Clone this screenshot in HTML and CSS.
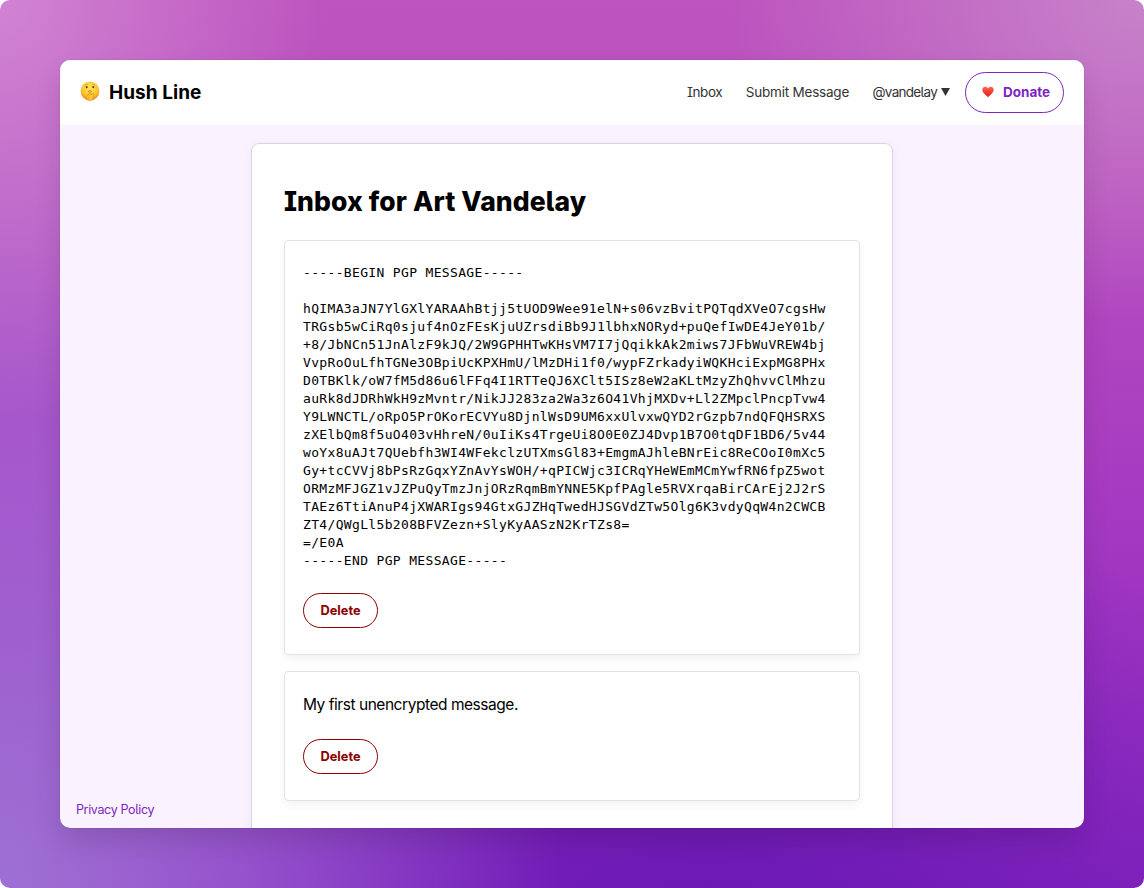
FILE: index.html
```html
<!DOCTYPE html>
<html lang="en">
<head>
<meta charset="utf-8">
<title>Hush Line</title>
<link rel="stylesheet" href="styles.css">
</head>
<body>
<div class="backdrop">
  <div class="window">
    <header class="header">
      <div class="brand">
        <svg class="brand-icon" viewBox="0 0 20 20">
          <defs><radialGradient id="face" cx=".5" cy=".35" r=".65"><stop offset="0" stop-color="#ffe65c"/><stop offset=".65" stop-color="#fcc52f"/><stop offset="1" stop-color="#e8871a"/></radialGradient></defs>
          <circle cx="10" cy="10" r="9.4" fill="url(#face)"/>
          <path d="M4.6 4.4q1.5-1.5 3-.7M12.4 3.7q1.6-.8 3 .7" fill="none" stroke="#d9952a" stroke-width=".7"/>
          <ellipse cx="6.7" cy="6.2" rx=".9" ry="1.1" fill="#5b3512"/><ellipse cx="13.2" cy="6.2" rx=".9" ry="1.1" fill="#5b3512"/>
          <path d="M8.2 10.6q1.8-1.3 3.6 0" fill="none" stroke="#b86b1c" stroke-width=".8"/>
          <path d="M9.2 9.6q.9-1 1.6 0v4.2l2.5-1.2q1 .5.3 1.6l-1 3.8q-.8 1.6-3.2 1.5-2.5-.3-2.6-2.7l.2-2.6q.7-1 2.2-.3z" fill="#ffc832" stroke="#db8a20" stroke-width=".6"/>
          <path d="M8 16.3l1.3.3m-1 1.3l1.4.2" stroke="#cf7817" stroke-width=".5"/>
        </svg>
        <span class="brand-name">Hush Line</span>
      </div>
      <nav class="nav">
        <a class="link inbox">Inbox</a>
        <a class="link submit">Submit Message</a>
        <a class="link user"><span class="handle">@vandelay</span><svg class="caret" viewBox="0 0 9 8"><path d="M0 0h9L4.5 8z" fill="#333"/></svg></a>
        <a class="donate">
          <svg class="heart" viewBox="0 0 12 12"><defs><linearGradient id="red" x2="0" y2="1"><stop stop-color="#ff6a56"/><stop offset=".5" stop-color="#f4382e"/><stop offset="1" stop-color="#d81f1c"/></linearGradient></defs><path d="M6 11.6C4.6 9.2.3 7.3.3 3.6.3.2 4.6-.4 6 2.5 7.4-.4 11.7.2 11.7 3.6c0 3.7-4.3 5.6-5.7 8z" fill="url(#red)"/></svg>
          <span>Donate</span>
        </a>
      </nav>
    </header>
    <main class="main">
      <a class="privacy">Privacy Policy</a>
      <section class="card">
        <h1 class="title">Inbox for Art Vandelay</h1>
        <article class="message">
<pre class="pgp">-----BEGIN PGP MESSAGE-----

hQIMA3aJN7YlGXlYARAAhBtjj5tUOD9Wee91elN+s06vzBvitPQTqdXVeO7cgsHw
TRGsb5wCiRq0sjuf4nOzFEsKjuUZrsdiBb9J1lbhxNORyd+puQefIwDE4JeY01b/
+8/JbNCn51JnAlzF9kJQ/2W9GPHHTwKHsVM7I7jQqikkAk2miws7JFbWuVREW4bj
VvpRoOuLfhTGNe3OBpiUcKPXHmU/lMzDHi1f0/wypFZrkadyiWQKHciExpMG8PHx
D0TBKlk/oW7fM5d86u6lFFq4I1RTTeQJ6XClt5ISz8eW2aKLtMzyZhQhvvClMhzu
auRk8dJDRhWkH9zMvntr/NikJJ283za2Wa3z6O41VhjMXDv+Ll2ZMpclPncpTvw4
Y9LWNCTL/oRpO5PrOKorECVYu8DjnlWsD9UM6xxUlvxwQYD2rGzpb7ndQFQHSRXS
zXElbQm8f5uO403vHhreN/0uIiKs4TrgeUi8O0E0ZJ4Dvp1B7O0tqDF1BD6/5v44
woYx8uAJt7QUebfh3WI4WFekclzUTXmsGl83+EmgmAJhleBNrEic8ReCOoI0mXc5
Gy+tcCVVj8bPsRzGqxYZnAvYsWOH/+qPICWjc3ICRqYHeWEmMCmYwfRN6fpZ5wot
ORMzMFJGZ1vJZPuQyTmzJnjORzRqmBmYNNE5KpfPAgle5RVXrqaBirCArEj2J2rS
TAEz6TtiAnuP4jXWARIgs94GtxGJZHqTwedHJSGVdZTw5Olg6K3vdyQqW4n2CWCB
ZT4/QWgLl5b208BFVZezn+SlyKyAASzN2KrTZs8=
=/E0A
-----END PGP MESSAGE-----</pre>
          <button class="delete">Delete</button>
        </article>
        <article class="message">
          <p class="plain">My first unencrypted message.</p>
          <button class="delete">Delete</button>
        </article>
      </section>
    </main>
  </div>
</div>
</body>
</html>
```
FILE: styles.css
```css
* { box-sizing: border-box; }
body { margin: 0; background: #fff; color: #000; font-family: Inter, "Liberation Sans", sans-serif; font-feature-settings: "cv08", "cv05"; }
.backdrop {
  width: 1144px; height: 888px; padding: 60px; border-radius: 10px;
  background:
    radial-gradient(ellipse 330px 420px at 0 0, rgba(216,150,218,.72), transparent),
    radial-gradient(ellipse 420px 320px at 100% 0, rgba(202,142,204,.8), transparent),
    radial-gradient(ellipse 560px 850px at 0 100%, rgba(160,117,212,.95), rgba(162,112,214,.6) 45%, transparent),
    radial-gradient(ellipse 600px 500px at 62% 105%, rgba(96,20,178,.75), transparent),
    linear-gradient(#bd54bf 0%, #b84fbe 20%, #a438c2 60%, #8424bd 100%);
}
.window { width: 1024px; height: 768px; display: flex; flex-direction: column; border-radius: 10px; overflow: hidden; background: #faf3ff; box-shadow: 0 0 1px rgba(0,0,0,.4), 0 14px 28px -2px rgba(0,0,0,.14); }
.header { flex: none; height: 65px; padding: 0 20px; display: flex; align-items: center; justify-content: space-between; background: #fff; }
.brand { display: flex; align-items: center; }
.brand-icon { width: 20px; height: 20px; margin: -3px 9px 0 0; }
.brand-name { font-size: 19px; font-weight: 750; letter-spacing: .05px; }
.nav { display: flex; align-items: center; font-size: 13.5px; line-height: 18px; color: #333; }
.link { margin-top: -1px; }
.inbox { margin-right: 23.5px; letter-spacing: -.4px; }
.submit { margin-right: 23.5px; letter-spacing: -.22px; }
.user { display: flex; align-items: center; margin-right: 15px; }
.handle { letter-spacing: -.72px; }
.caret { width: 9px; height: 8px; margin-left: 4px; }
.donate { width: 99px; height: 41px; display: flex; align-items: center; padding: 0 0 1px 16px; border: 1px solid #7d25c1; border-radius: 21px; color: #7d25c1; font-weight: 750; font-size: 13.5px; }
.heart { width: 12px; height: 12px; margin-right: 9px; }
.main { position: relative; flex: 1; min-height: 0; padding-top: 18px; display: flex; justify-content: center; align-items: flex-start; }
.privacy { position: absolute; left: 16px; bottom: 9px; font-size: 12.5px; line-height: 18px; letter-spacing: -.36px; color: #7d25c1; }
.card { width: 642px; height: 760px; padding: 32px; border: 1px solid #dcd3e2; border-radius: 8px; background: #fff; box-shadow: 0 2px 10px rgba(80,30,110,.07); }
.title { margin: 8px 0 21px; font-size: 26.5px; line-height: 35px; font-weight: 800; letter-spacing: .1px; }
.message { margin-bottom: 16px; padding: 22px 18px 26px; border: 1px solid #e2e2e2; border-radius: 4px; box-shadow: 0 4px 8px rgba(0,0,0,.05); }
.pgp { margin: 1px 0 23px; font-family: "DejaVu Sans Mono", monospace; font-size: 13px; line-height: 18px; letter-spacing: .34px; }
.plain { margin: 0 0 23px; font-size: 15.5px; line-height: 22px; letter-spacing: -.46px; }
.delete { display: block; width: 75px; height: 35px; padding: 0; background: #fff; border: 1px solid #8b0000; border-radius: 18px; color: #8b0000; font: 750 12.8px Inter, sans-serif; }
```
